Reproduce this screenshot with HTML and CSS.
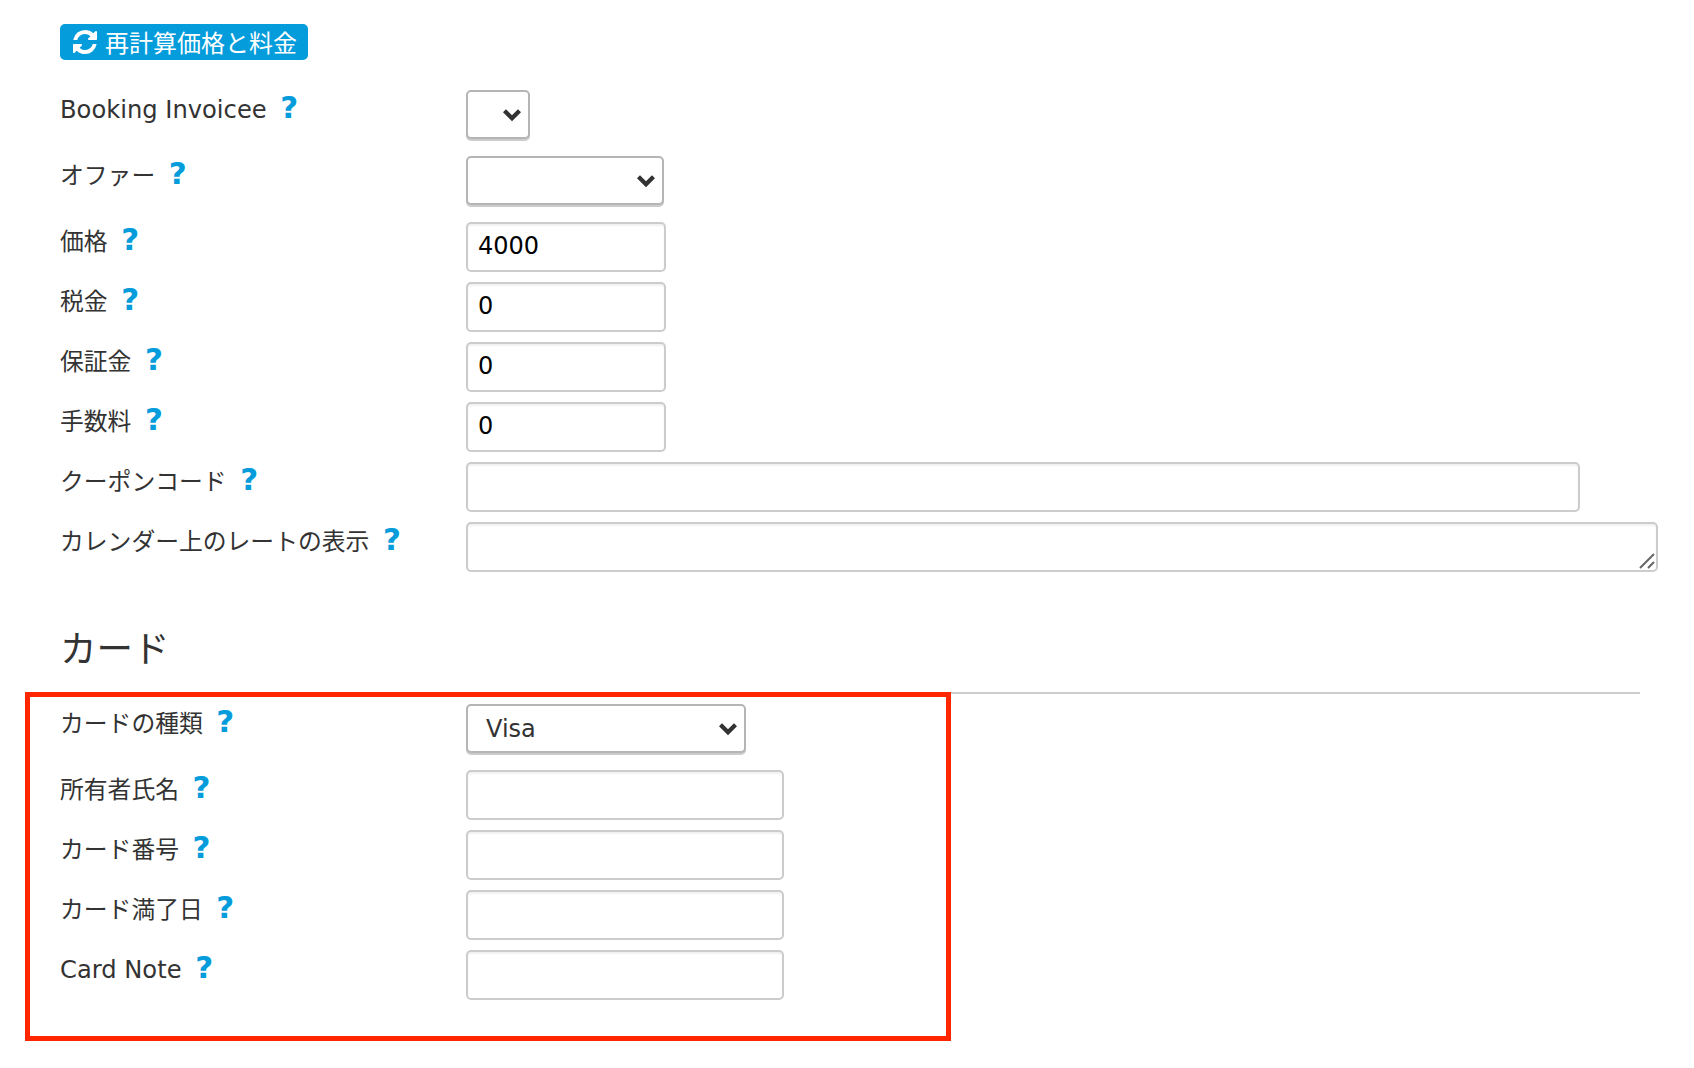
FILE: index.html
```html
<!DOCTYPE html>
<html lang="ja">
<head>
<meta charset="utf-8">
<title>料金</title>
<link rel="stylesheet" href="styles.css">
</head>
<body>
<main class="page">
  <button class="recalc" type="button">
    <svg class="recalc-icon" viewBox="0 0 1536 1792" aria-hidden="true"><path d="M1511 1056q0 5-1 7-64 268-268 434.500t-478 166.500q-146 0-282.500-55t-243.500-157l-129 129q-19 19-45 19t-45-19-19-45v-448q0-26 19-45t45-19h448q26 0 45 19t19 45-19 45l-137 137q71 66 161 102t187 36q134 0 250-65t186-179q11-17 53-117 8-23 30-23h192q13 0 22.500 9.500t9.500 22.500zm25-800v448q0 26-19 45t-45 19h-448q-26 0-45-19t-19-45 19-45l138-138q-148-137-349-137-134 0-250 65t-186 179q-11 17-53 117-8 23-30 23h-199q-13 0-22.500-9.500t-9.500-22.500v-7q65-268 270-434.500t480-166.500q146 0 284 55.500t245 156.500l130-129q19-19 45-19t45 19 19 45z"/></svg>
    <span class="recalc-text">再計算価格と料金</span>
  </button>

  <section class="fields">
    <div class="row row-select">
      <label class="label label-en">Booking Invoicee <span class="help">?</span></label>
      <select class="select select-xs"><option></option></select>
    </div>
    <div class="row row-select">
      <label class="label">オファー <span class="help">?</span></label>
      <select class="select select-s"><option></option></select>
    </div>
    <div class="row">
      <label class="label">価格 <span class="help">?</span></label>
      <input class="input input-s" value="4000">
    </div>
    <div class="row">
      <label class="label">税金 <span class="help">?</span></label>
      <input class="input input-s" value="0">
    </div>
    <div class="row">
      <label class="label">保証金 <span class="help">?</span></label>
      <input class="input input-s" value="0">
    </div>
    <div class="row">
      <label class="label">手数料 <span class="help">?</span></label>
      <input class="input input-s" value="0">
    </div>
    <div class="row">
      <label class="label">クーポンコード <span class="help">?</span></label>
      <input class="input input-l">
    </div>
    <div class="row">
      <label class="label">カレンダー上のレートの表示 <span class="help">?</span></label>
      <div class="textarea-wrap">
        <textarea class="input input-xl"></textarea>
        <svg class="grip" viewBox="0 0 16 16" aria-hidden="true"><path d="M1 15L15 1M9 15l6-6"/></svg>
      </div>
    </div>
  </section>

  <section class="card">
    <h2 class="card-title">カード</h2>
    <div class="row row-select">
      <label class="label">カードの種類 <span class="help">?</span></label>
      <select class="select select-m"><option>Visa</option></select>
    </div>
    <div class="row">
      <label class="label">所有者氏名 <span class="help">?</span></label>
      <input class="input input-m">
    </div>
    <div class="row">
      <label class="label">カード番号 <span class="help">?</span></label>
      <input class="input input-m">
    </div>
    <div class="row">
      <label class="label">カード満了日 <span class="help">?</span></label>
      <input class="input input-m">
    </div>
    <div class="row">
      <label class="label label-en">Card Note <span class="help">?</span></label>
      <input class="input input-m">
    </div>
  </section>

  <div class="highlight"></div>
</main>
</body>
</html>
```
FILE: styles.css
```css
* { box-sizing: border-box; }
html, body { margin: 0; background: #fff; }
body {
  font-family: "DejaVu Sans", "Noto Sans CJK JP", sans-serif;
  color: #333;
  font-size: 24px;
}
.page {
  position: relative;
  height: 1068px;
  padding: 24px 0 0 60px;
  overflow: hidden;
}
.recalc {
  display: flex;
  align-items: center;
  gap: 8px;
  width: 248px;
  height: 36px;
  padding: 0 0 0 13px;
  border: 0;
  border-radius: 5px;
  background: #049cdb;
  color: #fff;
  font: inherit;
  font-size: 24px;
  white-space: nowrap;
}
.recalc-text { padding-bottom: 2px; }
.recalc-icon { width: 24px; height: 28px; fill: #fff; flex: none; }
.fields { margin-top: 30px; }
.row {
  display: flex;
  align-items: flex-start;
  margin-bottom: 10px;
}
.row-select { margin-bottom: 17px; }
.label {
  flex: none;
  width: 406px;
  padding-top: 5px;
  line-height: 30px;
  font-size: 23.800px;
}
.label-en { font-size: 24.200px; }
.help {
  margin-left: 6px;
  font-weight: 700;
  font-size: 31px;
  line-height: 24px;
  color: #049cdb;
}
.input {
  display: block;
  height: 50px;
  margin: 0;
  padding: 0 10px 2px;
  border: 2px solid #ccc;
  border-radius: 5px;
  background: #fff;
  box-shadow: inset 0 2px 2px rgba(0, 0, 0, .06);
  color: #000;
  font: inherit;
  font-size: 24px;
}
textarea.input { resize: none; }
.textarea-wrap { position: relative; }
.grip {
  position: absolute;
  right: 3px;
  bottom: 3px;
  width: 16px;
  height: 16px;
  fill: none;
  stroke: #666;
  stroke-width: 2;
}
.input-s { width: 200px; }
.input-m { width: 318px; }
.input-l { width: 1114px; }
.input-xl { width: 1192px; }
.select {
  display: block;
  height: 49px;
  margin: 0;
  padding: 0 30px 0 18px;
  border: 2px solid #b5b5b5;
  border-radius: 5px;
  box-shadow: 0 2px 0 #ccc;
  appearance: none;
  background: #fff url("data:image/svg+xml,%3Csvg xmlns='http://www.w3.org/2000/svg' viewBox='0 0 16 12'%3E%3Cpath d='M2 3l6 6 6-6' fill='none' stroke='%23333' stroke-width='3.400'/%3E%3C/svg%3E") no-repeat right 6px center / 20px 15px;
  color: #333;
  font: inherit;
  font-size: 24px;
}
.select-xs { width: 64px; }
.select-s { width: 198px; }
.select-m { width: 280px; }
.card { margin-top: 34px; }
.card-title {
  margin: 0;
  width: 1580px;
  height: 88px;
  padding-top: 21px;
  border-bottom: 2px solid #ccc;
  font-size: 36.500px;
  font-weight: 400;
  line-height: 46px;
}
.card .row:first-of-type { margin-top: 10px; }
.highlight {
  position: absolute;
  left: 25px;
  top: 692px;
  width: 926px;
  height: 349px;
  border: 5px solid #ff2600;
}
```
